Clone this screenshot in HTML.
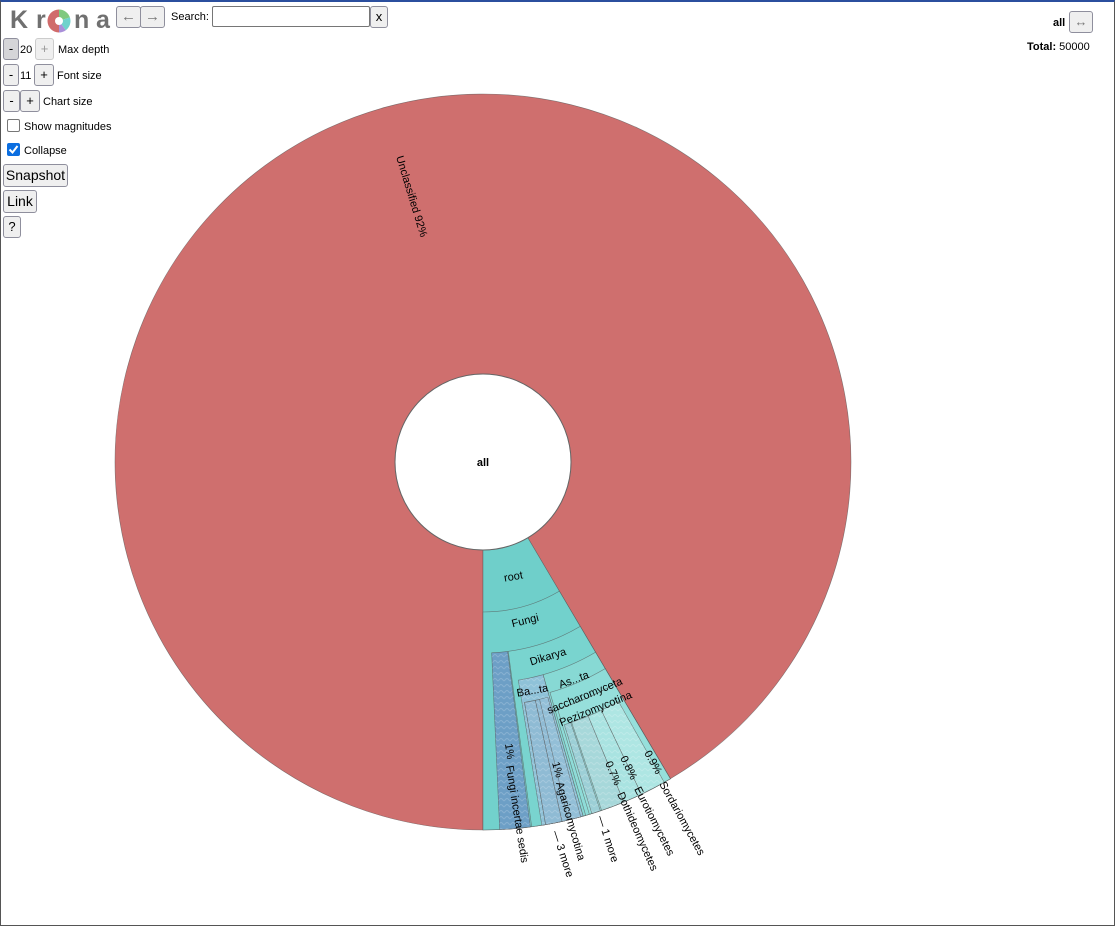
<!DOCTYPE html>
<html><head><meta charset="utf-8"><style>
html,body{margin:0;padding:0;width:1115px;height:925px;overflow:hidden;background:#fff;font-family:"Liberation Sans",Arial,sans-serif;}
#frame{position:absolute;left:0;top:0;width:1113px;height:923px;border:1px solid #555;border-top:2px solid #2b4f9e;}
.btn{position:absolute;background:#efefef;border:1px solid #8f8f9d;border-radius:3px;font-size:13px;color:#000;text-align:center;box-sizing:border-box;}
.lbl{position:absolute;font-size:11px;color:#000;}
.logo{position:absolute;left:10px;top:6px;font-size:25px;font-weight:bold;color:#707070;letter-spacing:0;}
</style></head><body>
<div id="frame"></div>
<div class="logo"><span style="position:absolute;left:0">K</span><span style="position:absolute;left:26px">r</span><span style="position:absolute;left:64px">n</span><span style="position:absolute;left:86px">a</span></div>
<svg style="position:absolute;left:47px;top:9px" width="24" height="24" viewBox="-12 -12 24 24">
<path d="M0 0 L0 -11.5 A11.5 11.5 0 0 1 10.9 -3.6Z" fill="#7fc97f"/>
<path d="M0 0 L10.9 -3.6 A11.5 11.5 0 0 1 6.8 9.3Z" fill="#6fd2cc"/>
<path d="M0 0 L6.8 9.3 A11.5 11.5 0 0 1 0 11.5Z" fill="#a98fd9"/>
<path d="M0 0 L0 11.5 A11.5 11.5 0 0 1 0 -11.5Z" fill="#d06b6b"/>
<circle r="4" fill="#fff"/></svg>
<div class="btn" style="left:116px;top:6px;width:25px;height:22px;color:#777;font-size:15px;line-height:19px">&larr;</div>
<div class="btn" style="left:140px;top:6px;width:25px;height:22px;color:#777;font-size:15px;line-height:19px">&rarr;</div>
<div class="lbl" style="left:171px;top:11px">Search:</div>
<div style="position:absolute;left:212px;top:6px;width:158px;height:21px;border:1px solid #767676;border-radius:2px;box-sizing:border-box"></div>
<div class="btn" style="left:370px;top:6px;width:18px;height:22px;line-height:20px">x</div>
<div class="btn" style="left:3px;top:38px;width:16px;height:22px;line-height:19px;background:#d5d5d8">-</div>
<div class="lbl" style="left:20px;top:44px">20</div>
<div class="btn" style="left:35px;top:38px;width:19px;height:22px;line-height:19px;color:#999;border-color:#ccc">+</div>
<div class="lbl" style="left:58px;top:44px">Max depth</div>
<div class="btn" style="left:3px;top:64px;width:16px;height:22px;line-height:19px">-</div>
<div class="lbl" style="left:20px;top:70px">11</div>
<div class="btn" style="left:34px;top:64px;width:20px;height:22px;line-height:19px">+</div>
<div class="lbl" style="left:57px;top:70px">Font size</div>
<div class="btn" style="left:3px;top:90px;width:17px;height:22px;line-height:19px">-</div>
<div class="btn" style="left:20px;top:90px;width:20px;height:22px;line-height:19px">+</div>
<div class="lbl" style="left:43px;top:96px">Chart size</div>
<div style="position:absolute;left:7px;top:119px;width:13px;height:13px;border:1px solid #777;border-radius:2px;box-sizing:border-box"></div>
<div class="lbl" style="left:24px;top:121px">Show magnitudes</div>
<div style="position:absolute;left:7px;top:143px;width:13px;height:13px;background:#0b6ee0;border-radius:2px"><svg width="13" height="13"><path d="M2.5 6.5 L5.5 9.5 L10.5 3" stroke="#fff" stroke-width="2" fill="none"/></svg></div>
<div class="lbl" style="left:24px;top:145px">Collapse</div>
<div class="btn" style="left:3px;top:164px;width:65px;height:23px;line-height:21px;font-size:14px">Snapshot</div>
<div class="btn" style="left:3px;top:190px;width:34px;height:23px;line-height:21px;font-size:14px">Link</div>
<div class="btn" style="left:3px;top:216px;width:18px;height:22px;line-height:20px">?</div>
<div class="lbl" style="left:1053px;top:17px;font-weight:bold">all</div>
<div class="btn" style="left:1069px;top:11px;width:24px;height:22px;line-height:19px;color:#777">&harr;</div>
<div class="lbl" style="left:1027px;top:41px"><b>Total:</b> 50000</div>
<svg id="chart" style="position:absolute;left:0;top:0" width="1115" height="925">
<defs><pattern id="h" width="6" height="6" patternUnits="userSpaceOnUse"><path d="M0 3 L3 0 L6 3" stroke="rgba(255,255,255,0.18)" fill="none"/></pattern></defs>
<g id="arcs"></g>
<circle cx="483" cy="462" r="88" fill="#fff" stroke="#666"/>
<g font-size="11" fill="#000" font-family="Liberation Sans,Arial,sans-serif">
<text x="483" y="466" text-anchor="middle" font-weight="bold">all</text>
<text transform="translate(396,157) rotate(73)">Unclassified   92%</text>
<text transform="translate(514,580) rotate(-10)" text-anchor="middle">root</text>
<text transform="translate(526,624) rotate(-14)" text-anchor="middle">Fungi</text>
<text transform="translate(549,660) rotate(-17)" text-anchor="middle">Dikarya</text>
<text transform="translate(533,694) rotate(-10)" text-anchor="middle">Ba...ta</text>
<text transform="translate(575,683) rotate(-20)" text-anchor="middle">As...ta</text>
<text transform="translate(586,699) rotate(-22)" text-anchor="middle">saccharomyceta</text>
<text transform="translate(597,712) rotate(-22)" text-anchor="middle">Pezizomycotina</text>
<text transform="translate(505,744) rotate(82)">1%</text>
<text transform="translate(506,766) rotate(81)">Fungi incertae sedis</text>
<text transform="translate(552,763) rotate(74)">1%</text>
<text transform="translate(556,783) rotate(74)">Agaricomycotina</text>
<text transform="translate(552,832) rotate(72)">— 3 more</text>
<text transform="translate(597,817) rotate(72)">— 1 more</text>
<text transform="translate(605,763) rotate(67)">0.7%</text>
<text transform="translate(620,758) rotate(64)">0.8%</text>
<text transform="translate(644,753) rotate(61)">0.9%</text>
<text transform="translate(617,794) rotate(66)">Dothideomycetes</text>
<text transform="translate(634,789) rotate(63)">Eurotiomycetes</text>
<text transform="translate(659,784) rotate(61)">Sordariomycetes</text>
</g>
</svg>
<script>
var cx=483,cy=462;
function P(r,a){a=a*Math.PI/180;return (cx+r*Math.cos(a)).toFixed(2)+" "+(cy+r*Math.sin(a)).toFixed(2);}
function arc(r0,r1,a0,a1,fill,hatch){
 var lg=(a1-a0)>180?1:0;
 var d="M"+P(r0,a0)+" L"+P(r1,a0)+" A"+r1+" "+r1+" 0 "+lg+" 1 "+P(r1,a1)+" L"+P(r0,a1)+" A"+r0+" "+r0+" 0 "+lg+" 0 "+P(r0,a0)+"Z";
 var s='<path d="'+d+'" fill="'+fill+'" stroke="#555" stroke-width="0.6" stroke-opacity="0.7"/>';
 if(hatch)s+='<path d="'+d+'" fill="url(#h)"/>';
 return s;}
var h="";
h+=arc(88,368,90,419.4,"#cf6f6e");
h+=arc(88,368,59.4,90,"#6fcfca");
h+=arc(150,368,59.4,90,"#72d1cc");
h+=arc(191,368,87.4,82.6<87.4?82.6:82.6,"#000");
h="";
h+=arc(88,368,90,419.4,"#cf6f6e");
h+=arc(88,368,59.4,90,"#6fcfca");
h+=arc(150,368,59.4,90,"#72d1cc");
h+=arc(191,368,82.6,87.4,"#6d9fc6",1);
h+=arc(191,368,59.4,82.4,"#79d4cf");
h+=arc(221,368,74.2,80.8,"#8fc2d8",1);
h+=arc(244,368,74.6,80.2,"#93bfd7",1);
h+=arc(244,368,77.6,80.2,"#8fbbd4",1);
h+=arc(244,368,76.6,77.6,"#8fbbd4",1);
h+=arc(221,368,59.4,74.2,"#87d9d4");
h+=arc(240,368,59.4,73.8,"#8edcd8");
h+=arc(258,368,59.4,73.2,"#96dfdb");
h+=arc(275,368,71.4,72.8,"#9ccfd6",1);
h+=arc(275,368,67.5,71.2,"#a7d8da",1);
h+=arc(275,368,64.5,67.5,"#a9e3e1",1);
h+=arc(275,368,60.5,64.5,"#aee6e3",1);
document.getElementById("arcs").innerHTML=h;
</script>
</body></html>
